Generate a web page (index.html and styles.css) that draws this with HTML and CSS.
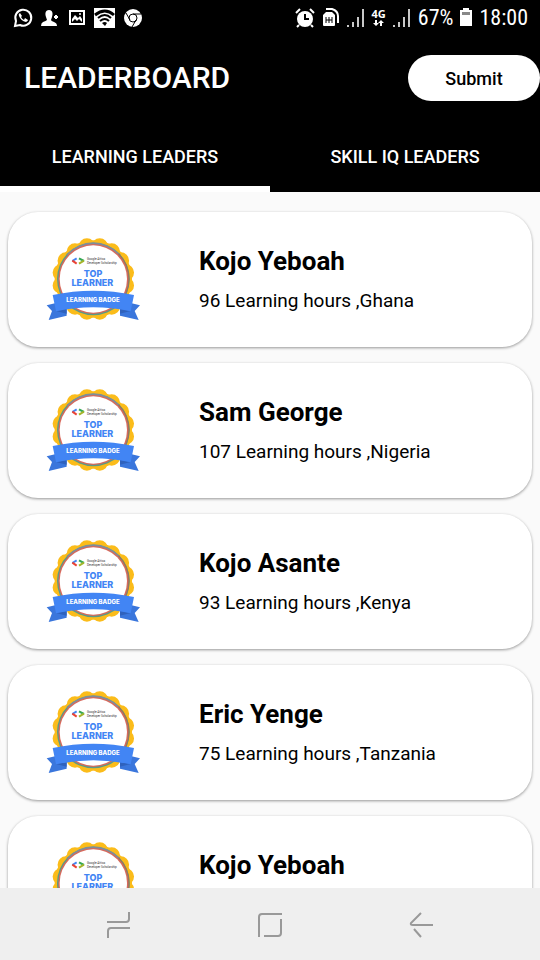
FILE: index.html
```
<!DOCTYPE html>
<html lang="en">
<head>
<meta charset="utf-8">
<meta name="viewport" content="width=device-width, initial-scale=1">
<title>Leaderboard</title>
<link rel="stylesheet" href="styles.css">
</head>
<body>
<div class="screen">
  <div class="status">
    <div class="status-group left">
      <svg width="20" height="20" viewBox="0 0 20 20"><path d="M2 18 3 13A8 8 0 1 1 7 17Z" fill="none" stroke="#fff" stroke-width="2"/><path d="M7 5Q5 6 6 8Q8 13 13 14Q15 13 15 12L12 10 11 12Q9 11 8 9L9 8Z" fill="#fff"/></svg>
      <svg width="20" height="20" viewBox="0 0 20 20"><path d="M9 2C5 2 5 6 6 9L7 12Q6 13 3 14Q1 15 1 18H17Q17 15 14 14Q11 13 11 12L12 9C13 6 13 2 9 2Z" fill="#fff"/><path d="M16 7V11M14 9H18" stroke="#fff" stroke-width="2"/></svg>
      <svg width="20" height="20" viewBox="0 0 20 20"><path d="M3 3H17V16H3Z" fill="none" stroke="#fff" stroke-width="2"/><path d="M5 14V11L8 7 11 10 13 8 15 11V14L12 11 10 13 8 11Z" fill="#fff"/><circle cx="13" cy="6" r="1" fill="#fff"/></svg>
      <svg width="22" height="22" viewBox="0 0 22 22"><path d="M0 1H21V21H0Z" fill="#fff"/><path d="M1 8Q11 0 20 8" fill="none" stroke="#000" stroke-width="3"/><path d="M4 11Q11 5 17 11M6 14Q11 10 15 14" fill="none" stroke="#000" stroke-width="2"/><path d="M8 16Q11 14 13 16L11 19Z"/></svg>
      <svg width="20" height="20" viewBox="0 0 20 20"><circle cx="10" cy="10" r="9" fill="#fff"/><circle cx="10" cy="10" r="4" fill="#fff" stroke="#000"/><path d="M10 6H18M7 12 3 5M13 12 9 19" stroke="#000" fill="none"/></svg>
    </div>
    <div class="status-group">
      <svg width="20" height="20" viewBox="0 0 20 20"><circle cx="10" cy="11" r="8" fill="#fff"/><path d="M1 5 5 1M15 1 19 5M4 17 2 19M16 17 18 19" stroke="#fff" stroke-width="2"/><path d="M10 6V11H14" fill="none" stroke="#000" stroke-width="2"/></svg>
      <svg width="18" height="20" viewBox="0 0 18 20"><path d="M4 4H10L13 7V17Q13 18 12 18H2Q1 18 1 17V7Z" fill="#fff"/><path d="M4 1H10Q16 3 16 8V15" fill="none" stroke="#fff" stroke-width="2"/><path d="M4 9V15M10 9V15M7 9V15M4 12H10" stroke="#000" fill="none"/></svg>
      <svg width="18" height="18"><path id="signal" d="M0 18V16H2V18ZM5 18V13H7V18ZM10 18V8H12V18ZM15 18V0H17V18Z" fill="#c8c8c8"/></svg>
      <div class="network"><span>4G</span><svg width="12" height="8" viewBox="0 0 12 8"><path d="M3 1V5M8 7V3" stroke="#fff" stroke-width="2"/><path d="M0 4H6L3 7ZM5 4H11L8 1Z" fill="#fff"/></svg></div>
      <svg width="18" height="18"><use href="#signal"/></svg>
      <span class="status-text">67%</span>
      <svg class="battery" width="12" height="20" viewBox="0 0 12 20"><path d="M3 2V0H9V2H12V18H0V2Z" fill="#fff"/><path d="M2 4H10V7H2Z" fill="#888"/></svg>
      <time class="status-text">18:00</time>
    </div>
  </div>
  <header class="app-bar">
    <h1>LEADERBOARD</h1>
    <button class="submit" type="button">Submit</button>
  </header>
  <nav class="tabs">
    <a class="tab active" href="#learning" aria-current="page">LEARNING LEADERS</a>
    <a class="tab" href="#skill">SKILL IQ LEADERS</a>
  </nav>
  <main class="list" id="learning">
    <article class="card">
      <svg class="badge" viewBox="18 20 288 258" role="img" aria-label="Top learner">
        <g id="badge">
          <circle cx="160" cy="146" r="116" fill="#fbbc1a"/>
          <circle cx="160" cy="146" r="99" fill="none" stroke="#fbbc1a" stroke-width="50" stroke-linecap="round" pathLength="16" stroke-dasharray="0 1" stroke-dashoffset="0.5"/>
          <circle cx="160" cy="146" r="109" fill="#5c9a86"/>
          <path d="M80 71A109 109 0 0 1 240 71L160 146Z" fill="#7d8f9a"/>
          <path d="M237 69A109 109 0 0 1 237 223L160 146Z" fill="#8f7a62"/>
          <circle cx="160" cy="146" r="105" fill="#d8695c"/>
          <circle cx="160" cy="146" r="101" fill="#fff"/>
          <g fill="none" stroke-width="6">
            <path d="M110 84 97 92" stroke="#4285f4"/>
            <path d="M97 91 110 100" stroke="#ea4335"/>
            <path d="M117 84 132 92" stroke="#34a853"/>
            <path d="M132 91 117 100" stroke="#a5b52c"/>
          </g>
          <text class="badge-org" x="141" y="90">Google Africa</text>
          <text class="badge-org" x="141" y="100">Developer Scholarship</text>
          <text class="badge-title" x="159" y="141">TOP</text>
          <text class="badge-title" x="157" y="166">LEARNER</text>
          <path d="M48 218 20 225 36 242 26 269 80 256 80 226ZM272 218 300 225 284 242 296 269 240 256 240 226Z" fill="#3a76dc"/>
          <path d="M48 242 80 236 80 250ZM272 242 240 236 240 250Z" fill="#2f62bd"/>
          <path d="M38 194Q160 168 282 194L272 243Q160 219 48 243Z" fill="#4285f4"/>
          <text class="badge-ribbon" x="159" y="215">LEARNING BADGE</text>
        </g>
      </svg>
      <div><h2>Kojo Yeboah</h2><p>96 Learning hours ,Ghana</p></div>
    </article>
    <article class="card"><svg class="badge" viewBox="18 20 288 258" role="img" aria-label="Top learner"><use href="#badge"/></svg><div><h2>Sam George</h2><p>107 Learning hours ,Nigeria</p></div></article>
    <article class="card"><svg class="badge" viewBox="18 20 288 258" role="img" aria-label="Top learner"><use href="#badge"/></svg><div><h2>Kojo Asante</h2><p>93 Learning hours ,Kenya</p></div></article>
    <article class="card"><svg class="badge" viewBox="18 20 288 258" role="img" aria-label="Top learner"><use href="#badge"/></svg><div><h2>Eric Yenge</h2><p>75 Learning hours ,Tanzania</p></div></article>
    <article class="card"><svg class="badge" viewBox="18 20 288 258" role="img" aria-label="Top learner"><use href="#badge"/></svg><div><h2>Kojo Yeboah</h2></div></article>
  </main>
  <footer class="nav-bar">
    <button type="button" aria-label="Recent apps"><svg width="28" height="28" viewBox="0 0 28 28"><path d="M3 11H22Q25 11 25 8V1M26 17H7Q4 17 4 20V27"/></svg></button>
    <button type="button" aria-label="Home"><svg width="28" height="28" viewBox="0 0 28 28"><path d="M3 26V6Q3 3 6 3H26M25 8V22Q25 25 22 25H8"/></svg></button>
    <button type="button" aria-label="Back"><svg width="28" height="28" viewBox="0 0 28 28"><path d="M13 2 3 12Q2 14 5 14H25M6 18 13 26"/></svg></button>
  </footer>
</div>
</body>
</html>
```
FILE: styles.css
```
* { box-sizing: border-box; }
body { margin: 0; font-family: Roboto, "Liberation Sans", sans-serif; background: #fafafa; color: #000; }
h1, h2, p { margin: 0; }
button { border: 0; font: inherit; padding: 0; }
.screen { height: 100vh; display: flex; flex-direction: column; overflow: hidden; }

.status { flex: none; display: flex; justify-content: space-between; align-items: center; height: 36px; padding: 0 12px 0 13px; background: #000; color: #fff; }
.status-group { display: flex; align-items: center; gap: 7px; }
.status-text { font: 22px/24px "Roboto Condensed", Roboto, sans-serif; }
.network { display: flex; flex-direction: column; align-items: center; font: bold 11px/10px "Open Sans", sans-serif; }

.app-bar { flex: none; display: flex; justify-content: space-between; align-items: center; height: 84px; padding-left: 24px; background: #000; }
h1 { font-size: 30px; line-height: 36px; font-weight: 500; color: #fff; }
.submit { width: 132px; height: 46px; border-radius: 23px; background: #fff; color: #000; font-size: 18px; font-weight: 500; }

.tabs { flex: none; display: flex; height: 72px; background: #000; }
.tab { flex: 1; display: flex; align-items: center; justify-content: center; border-top: 6px solid #000; border-bottom: 6px solid #000; color: #fff; text-decoration: none; font-size: 18px; font-weight: 500; }
.tab.active { border-bottom-color: #fff; }

.list { flex: 1; min-height: 0; overflow: hidden; display: flex; flex-direction: column; gap: 16px; padding: 20px 8px 0; }
.card { flex: none; display: flex; align-items: center; height: 135px; padding-left: 38px; border-radius: 30px; background: #fff; box-shadow: 0 1px 3px rgba(0, 0, 0, 0.4); }
.card > div { align-self: flex-start; padding-top: 32px; }
.badge { width: 96px; height: 86px; margin-right: 57px; }
h2 { font-size: 26px; line-height: 34px; font-weight: 700; }
.card p { margin-top: 10px; font-size: 19px; line-height: 26px; }

.badge-org { font: 9px Roboto, sans-serif; fill: #333; }
.badge-title { font: 800 27px Inter, sans-serif; fill: #4285f4; text-anchor: middle; }
.badge-ribbon { font: 800 18px Inter, sans-serif; fill: #fff; text-anchor: middle; }

.nav-bar { flex: none; display: flex; justify-content: center; gap: 124px; height: 72px; background: #efefef; }
.nav-bar button { width: 28px; background: none; display: flex; align-items: center; padding-top: 2px; }
.nav-bar path { fill: none; stroke: #999; stroke-width: 2; }
```
